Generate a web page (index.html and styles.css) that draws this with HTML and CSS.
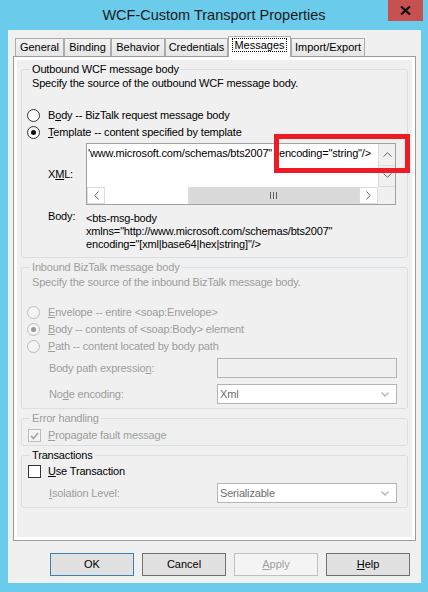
FILE: index.html
```html
<!DOCTYPE html>
<html lang="en">
  <head>
    <meta charset="UTF-8" />
    <title>WCF-Custom Transport Properties</title>
    <link rel="stylesheet" href="styles.css">
  </head>
  <body>
    <div class="window">
      <!-- title bar -->
      <div class="titlebar">
        <span class="title">WCF-Custom Transport Properties</span>
        <span class="close">
          <svg width="11" height="9" viewBox="0 0 11 9"><path d="M1 0.5 L10 8.5 M10 0.5 L1 8.5" stroke="#111" stroke-width="2.2"/></svg>
        </span>
      </div>

      <div class="client">
        <ul class="tabs">
          <li class="w-general">General</li>
          <li class="w-binding">Binding</li>
          <li class="w-behavior">Behavior</li>
          <li class="w-credentials">Credentials</li>
          <li class="w-messages active"><span class="focus">Messages</span></li>
          <li class="w-import">Import/Export</li>
        </ul>

        <div class="panel">
          <div class="page">
            <!-- outbound -->
            <fieldset class="group outbound">
              <legend>Outbound WCF message body</legend>
              <p class="hint">Specify the source of the outbound WCF message body.</p>
              <div class="option first"><span class="radio"></span><span>B<u>o</u>dy -- BizTalk request message body</span></div>
              <div class="option"><span class="radio checked"></span><span><u>T</u>emplate -- content specified by template</span></div>
              <div class="xml-row">
                <span class="side-label">X<u>M</u>L:</span>
                <div class="xml-box">
                  <div class="xml-text">'www.microsoft.com/schemas/bts2007" encoding="string"/&gt;</div>
                  <div class="vscroll">
                    <span class="sb-btn">
                      <svg width="9" height="5" viewBox="0 0 9 5"><path d="M0.5 4.5 L4.5 0.8 L8.5 4.5" fill="none" stroke="#606060"/></svg>
                    </span>
                    <span class="sb-btn">
                      <svg width="9" height="5" viewBox="0 0 9 5"><path d="M0.5 0.5 L4.5 4.2 L8.5 0.5" fill="none" stroke="#606060"/></svg>
                    </span>
                  </div>
                  <div class="hscroll">
                    <span class="sb-btn left">
                      <svg width="5" height="9" viewBox="0 0 5 9"><path d="M4.5 0.5 L0.8 4.5 L4.5 8.5" fill="none" stroke="#606060"/></svg>
                    </span>
                    <span class="sb-track"></span>
                    <span class="sb-thumb">
                      <svg width="7" height="7" viewBox="0 0 7 7"><path d="M0.5 0 V7 M3.5 0 V7 M6.5 0 V7" stroke="#606060"/></svg>
                    </span>
                    <span class="sb-btn right">
                      <svg width="5" height="9" viewBox="0 0 5 9"><path d="M0.5 0.5 L4.2 4.5 L0.5 8.5" fill="none" stroke="#606060"/></svg>
                    </span>
                  </div>
                  <div class="sb-corner"></div>
                </div>
              </div>
              <div class="body-row">
                <span class="side-label">Body:</span>
                <div class="body-text">
                  &lt;bts-msg-body<br>
                  xmlns="http://www.microsoft.com/schemas/bts2007"<br>
                  encoding="[xml|base64|hex|string]"/&gt;
                </div>
              </div>
            </fieldset>

            <!-- inbound (disabled) -->
            <fieldset class="group inbound disabled">
              <legend>Inbound BizTalk message body</legend>
              <p class="hint">Specify the source of the inbound BizTalk message body.</p>
              <div class="option first"><span class="radio"></span><span><u>E</u>nvelope -- entire &lt;soap:Envelope&gt;</span></div>
              <div class="option"><span class="radio checked"></span><span><u>B</u>ody -- contents of &lt;soap:Body&gt; element</span></div>
              <div class="option"><span class="radio"></span><span><u>P</u>ath -- content located by body path</span></div>
              <div class="field-row path">
                <span class="field-label">Body path expressio<u>n</u>:</span>
                <span class="input"></span>
              </div>
              <div class="field-row node">
                <span class="field-label">No<u>d</u>e encoding:</span>
                <span class="select">
                  <span>Xml</span>
                  <svg width="8" height="5" viewBox="0 0 8 5"><path d="M0.5 0.5 L4 4 L7.5 0.5" fill="none" stroke="#b4b4b4" stroke-width="1.4"/></svg>
                </span>
              </div>
            </fieldset>

            <!-- error handling (disabled) -->
            <fieldset class="group errors disabled">
              <legend>Error handling</legend>
              <div class="option check-row">
                <span class="checkbox">
                  <svg width="9" height="8" viewBox="0 0 9 8"><path d="M1 4 L3.5 6.5 L8 1" fill="none" stroke="#a8a8a8" stroke-width="1.8"/></svg>
                </span>
                <span><u>P</u>ropagate fault message</span>
              </div>
            </fieldset>

            <!-- transactions -->
            <fieldset class="group transactions">
              <legend>Transactions</legend>
              <div class="option check-row"><span class="checkbox"></span><span><u>U</u>se Transaction</span></div>
              <div class="field-row isolation">
                <span class="field-label muted"><u>I</u>solation Level:</span>
                <span class="select">
                  <span>Serializable</span>
                  <svg width="8" height="5" viewBox="0 0 8 5"><path d="M0.5 0.5 L4 4 L7.5 0.5" fill="none" stroke="#b4b4b4" stroke-width="1.4"/></svg>
                </span>
              </div>
            </fieldset>
          </div>
        </div>

        <div class="buttons">
          <span class="btn default">OK</span>
          <span class="btn">Cancel</span>
          <span class="btn disabled"><u>A</u>pply</span>
          <span class="btn"><u>H</u>elp</span>
        </div>
      </div>

      <!-- highlight box drawn over the dialog -->
      <div class="callout"></div>
    </div>
  </body>
</html>
```

FILE: styles.css
```css
/* reset */
* {
  margin: 0;
  padding: 0;
  box-sizing: border-box;
}

body {
  background-color: #6bcbea;
  font-family: "Liberation Sans", Arial, sans-serif;
  font-size: 11px;
  line-height: 13px;
  letter-spacing: -0.17px;
  color: #000;
}

u {
  text-decoration: underline;
  text-underline-offset: 1px;
}

/* window frame */
.window {
  position: relative;
  width: 428px;
  height: 592px;
  display: flex;
  flex-direction: column;
}

.titlebar {
  height: 30px;
  display: grid;
  grid-template-columns: 35px 1fr 35px;
  padding: 0 5px;
}
.title {
  grid-column: 2;
  text-align: center;
  font-size: 14.5px;
  letter-spacing: 0;
  line-height: 30px;
  color: #1a1a1a;
}
.close {
  grid-column: 3;
  height: 21px;
  background-color: #c75050;
  display: flex;
  align-items: center;
  justify-content: center;
}

.client {
  flex: auto;
  margin: 0 7px 9px 8px;
  padding: 6px 5px 0;
  background-color: #f0f0f0;
  display: flex;
  flex-direction: column;
}

/* tab strip */
.tabs {
  list-style: none;
  display: flex;
  align-items: flex-start;
  height: 21px;
  margin: 0 0 -1px 2px;
  position: relative;
  z-index: 1;
}
.tabs li {
  height: 18px;
  margin-top: 2px;
  border: 1px solid #acacac;
  border-bottom: none;
  background: linear-gradient(#f2f2f2, #e6e6e6);
  text-align: center;
  line-height: 16px;
  letter-spacing: 0;
}
.tabs li.active {
  height: 21px;
  margin-top: 0;
  background: #fff;
  line-height: 17px;
}
.tabs .focus {
  border: 1px dotted #000;
  padding: 0 1px;
}
.w-general { width: 49px; }
.w-binding { width: 47px; }
.w-behavior { width: 54px; }
.w-credentials { width: 63px; }
.w-messages { width: 63px; }
.w-import { width: 74px; }

/* tab panel */
.panel {
  height: 485px;
  border: 1px solid #9c9c9c;
  background-color: #fff;
  padding: 3px;
}
.page {
  height: 100%;
  background-color: #f0f0f0;
  padding: 3px 4px 0;
}

/* group boxes */
.group {
  border: 1px solid #d5dfe5;
  border-radius: 3px;
  padding: 0 5px;
  min-width: 0;
}
.group legend {
  margin-left: 3px;
  padding: 0 2px;
  line-height: 13px;
}
.group + .group {
  margin-top: 3px;
}
.outbound { padding-bottom: 6px; }
.inbound { padding-bottom: 4px; }
.errors { padding-bottom: 1px; }
.transactions { padding-bottom: 4px; }

.disabled,
.muted {
  color: #9d9d9d;
}

.hint {
  margin: 1px 0 0 5px;
}
.inbound .hint {
  margin-top: 2px;
}

/* radio and checkbox rows */
.option {
  height: 17px;
  display: flex;
  align-items: center;
  gap: 8px;
}
.option.first {
  margin-top: 17px;
}
.inbound .option.first {
  margin-top: 15px;
}
.radio {
  width: 13px;
  height: 13px;
  border: 1px solid #333;
  border-radius: 50%;
  background: linear-gradient(#f4f4f4, #fff);
  display: flex;
  align-items: center;
  justify-content: center;
}
.radio.checked::after {
  content: "";
  width: 5px;
  height: 5px;
  border-radius: 50%;
  background-color: #111;
}
.disabled .radio {
  border-color: #bcbcbc;
  background: #f4f4f4;
}
.disabled .radio.checked::after {
  background-color: #9a9a9a;
}

.checkbox {
  width: 13px;
  height: 13px;
  margin-left: 1px;
  margin-right: -1px;
  border: 1px solid #333;
  background-color: #fff;
  display: flex;
  align-items: center;
  justify-content: center;
}
.disabled .checkbox {
  border-color: #bcbcbc;
  background-color: #f4f4f4;
}
.errors .check-row {
  margin-top: 2px;
}
.transactions .check-row {
  margin-top: 1px;
}

/* xml editor */
.xml-row {
  display: flex;
  align-items: center;
  margin-top: 2px;
  padding-left: 21px;
}
.side-label {
  width: 38px;
  flex: none;
}
.xml-box {
  width: 310px;
  height: 62px;
  border: 1px solid #a0a0a0;
  background-color: #fff;
  display: grid;
  grid-template-columns: 1fr 17px;
  grid-template-rows: 1fr 17px;
}
.xml-text {
  padding: 3px 0 0 1px;
  white-space: nowrap;
  word-spacing: 4px;
  overflow: hidden;
}
.vscroll {
  display: flex;
  flex-direction: column;
}
.vscroll .sb-btn {
  flex: 1;
  border-left: 1px solid #dcdcdc;
  border-bottom: 1px solid #dcdcdc;
}
.hscroll {
  display: flex;
  background-color: #f0f0f0;
}
.sb-btn {
  display: flex;
  align-items: center;
  justify-content: center;
  background-color: #f0f0f0;
}
.hscroll .sb-btn {
  width: 18px;
  border: 1px solid #dcdcdc;
  background-color: #fff;
}
.hscroll .sb-btn.right {
  width: 19px;
}
.sb-track {
  width: 83px;
  background-color: #fff;
}
.sb-thumb {
  flex: auto;
  background-color: #dadada;
  display: flex;
  align-items: center;
  justify-content: center;
}
.sb-corner {
  background-color: #f0f0f0;
}

.body-row {
  display: flex;
  margin-top: 7px;
  padding-left: 21px;
}
.body-row .side-label {
  margin-top: -2px;
}

/* label + input rows */
.field-row {
  display: flex;
  align-items: center;
  padding-left: 22px;
}
.field-row.path { margin-top: 3px; }
.field-row.node { margin-top: 6px; }
.field-row.isolation { margin-top: 3px; }
.field-label {
  width: 168px;
  flex: none;
}
.input,
.select {
  width: 180px;
  height: 20px;
  border: 1px solid #b4b4b4;
}
.input {
  background-color: #f0f0f0;
}
.select {
  background-color: #fff;
  color: #6d6d6d;
  display: flex;
  align-items: center;
  justify-content: space-between;
  padding: 0 7px 0 2px;
}

/* dialog buttons */
.buttons {
  display: flex;
  justify-content: flex-end;
  gap: 8px;
  margin-top: 12px;
  padding-right: 6px;
}
.btn {
  width: 84px;
  height: 23px;
  border: 1px solid #707070;
  background-color: #e1e1e1;
  display: flex;
  align-items: center;
  justify-content: center;
  letter-spacing: 0;
}
.btn.default {
  border-color: #3c7fb1;
}
.btn.disabled {
  border-color: #bfbfbf;
  background-color: #f4f4f4;
  color: #a0a0a0;
}

/* red highlight drawn on top */
.callout {
  position: absolute;
  left: 274px;
  top: 134px;
  width: 136px;
  height: 39px;
  border: 5px solid #ed1c24;
}
```
